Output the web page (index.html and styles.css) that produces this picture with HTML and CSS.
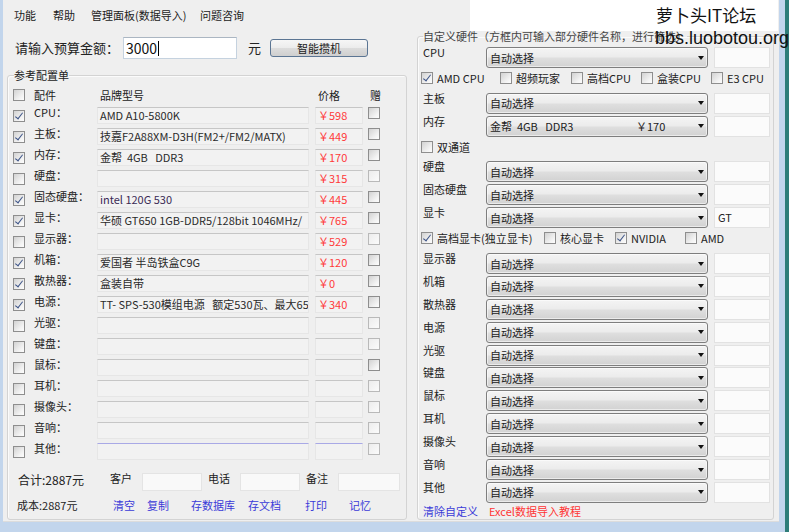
FILE: index.html
```html
<!DOCTYPE html>
<html lang="zh-CN">
<head>
<meta charset="utf-8">
<title>攒机助手</title>
<link rel="stylesheet" href="styles.css">
</head>
<body>
<div class="window">
  <nav class="menu"><span>功能</span><span>帮助</span><span>管理面板(数据导入)</span><span>问题咨询</span></nav>

  <div class="main">
    <section class="left">
      <div class="budget">
        <span class="budget-label">请输入预算金额：</span>
        <div class="budget-input">3000<span class="caret"></span></div>
        <span class="yuan">元</span>
        <button class="btn">智能攒机</button>
      </div>

      <fieldset class="group ref">
        <legend>参考配置单</legend>
        <div class="thead">
          <span class="cb"></span><span class="h-part">配件</span><span class="h-model">品牌型号</span><span class="h-price">价格</span><span class="h-gift">赠</span>
        </div>
        <div class="rows">
          <div class="row"><span class="cb on"></span><span class="lbl">CPU：</span><div class="mbox">AMD A10-5800K</div><div class="pbox">￥598</div><span class="cb gift"></span></div>
          <div class="row"><span class="cb on"></span><span class="lbl">主板：</span><div class="mbox">技嘉F2A88XM-D3H(FM2+/FM2/MATX)</div><div class="pbox">￥449</div><span class="cb gift"></span></div>
          <div class="row"><span class="cb on"></span><span class="lbl">内存：</span><div class="mbox">金帮  4GB   DDR3</div><div class="pbox">￥170</div><span class="cb gift"></span></div>
          <div class="row"><span class="cb"></span><span class="lbl">硬盘：</span><div class="mbox"></div><div class="pbox">￥315</div><span class="cb gift light"></span></div>
          <div class="row"><span class="cb on"></span><span class="lbl">固态硬盘：</span><div class="mbox purple">intel 120G 530</div><div class="pbox">￥445</div><span class="cb gift"></span></div>
          <div class="row"><span class="cb on"></span><span class="lbl">显卡：</span><div class="mbox">华硕 GT650 1GB-DDR5/128bit 1046MHz/</div><div class="pbox">￥765</div><span class="cb gift"></span></div>
          <div class="row"><span class="cb"></span><span class="lbl">显示器：</span><div class="mbox"></div><div class="pbox">￥529</div><span class="cb gift light"></span></div>
          <div class="row"><span class="cb on"></span><span class="lbl">机箱：</span><div class="mbox">爱国者 半岛铁盒C9G</div><div class="pbox">￥120</div><span class="cb gift"></span></div>
          <div class="row"><span class="cb on"></span><span class="lbl">散热器：</span><div class="mbox">盒装自带</div><div class="pbox">￥0</div><span class="cb gift"></span></div>
          <div class="row"><span class="cb on"></span><span class="lbl">电源：</span><div class="mbox">TT- SPS-530模组电源   额定530瓦、最大65</div><div class="pbox">￥340</div><span class="cb gift"></span></div>
          <div class="row"><span class="cb"></span><span class="lbl">光驱：</span><div class="mbox"></div><div class="pbox"></div><span class="cb gift light"></span></div>
          <div class="row"><span class="cb"></span><span class="lbl">键盘：</span><div class="mbox"></div><div class="pbox"></div><span class="cb gift light"></span></div>
          <div class="row"><span class="cb"></span><span class="lbl">鼠标：</span><div class="mbox"></div><div class="pbox"></div><span class="cb gift"></span></div>
          <div class="row"><span class="cb"></span><span class="lbl">耳机：</span><div class="mbox"></div><div class="pbox"></div><span class="cb gift light"></span></div>
          <div class="row"><span class="cb"></span><span class="lbl">摄像头：</span><div class="mbox"></div><div class="pbox"></div><span class="cb gift light"></span></div>
          <div class="row"><span class="cb"></span><span class="lbl">音响：</span><div class="mbox"></div><div class="pbox"></div><span class="cb gift light"></span></div>
          <div class="row"><span class="cb"></span><span class="lbl">其他：</span><div class="mbox blue-top"></div><div class="pbox blue-top"></div><span class="cb gift light"></span></div>
        </div>

        <div class="totals">
          <span class="sum">合计:2887元</span>
          <span class="flabel">客户</span><span class="field"></span>
          <span class="flabel gap">电话</span><span class="field"></span>
          <span class="flabel gap">备注</span><span class="field wide"></span>
        </div>
        <div class="actions">
          <span class="cost">成本:2887元</span>
          <a class="link">清空</a><a class="link">复制</a><a class="link">存数据库</a><a class="link">存文档</a><a class="link">打印</a><a class="link">记忆</a>
        </div>
      </fieldset>
    </section>

    <section class="right">
      <fieldset class="group custom">
        <legend>自定义硬件（方框内可输入部分硬件名称，进行筛选）</legend>
        <div class="hw">
          <div class="hrow"><span class="hlabel">CPU</span><div class="sel"><span>自动选择</span><i class="arrow"></i></div><span class="tb"></span></div>
          <div class="opts opts-cpu">
            <label class="opt"><span class="cb on"></span>AMD CPU</label>
            <label class="opt"><span class="cb"></span>超频玩家</label>
            <label class="opt"><span class="cb"></span>高档CPU</label>
            <label class="opt"><span class="cb"></span>盒装CPU</label>
            <label class="opt"><span class="cb"></span>E3 CPU</label>
          </div>
          <div class="hrow"><span class="hlabel">主板</span><div class="sel"><span>自动选择</span><i class="arrow"></i></div><span class="tb"></span></div>
          <div class="hrow"><span class="hlabel">内存</span><div class="sel"><span class="mem">金帮  4GB   DDR3</span><span>￥170</span><i class="arrow"></i></div><span class="tb"></span></div>
          <div class="opts"><label class="opt"><span class="cb"></span>双通道</label></div>
          <div class="hrow"><span class="hlabel">硬盘</span><div class="sel"><span>自动选择</span><i class="arrow"></i></div><span class="tb"></span></div>
          <div class="hrow"><span class="hlabel">固态硬盘</span><div class="sel"><span>自动选择</span><i class="arrow"></i></div><span class="tb"></span></div>
          <div class="hrow"><span class="hlabel">显卡</span><div class="sel"><span>自动选择</span><i class="arrow"></i></div><span class="tb">GT</span></div>
          <div class="opts opts-gpu">
            <label class="opt"><span class="cb on"></span>高档显卡(独立显卡)</label>
            <label class="opt"><span class="cb"></span>核心显卡</label>
            <label class="opt"><span class="cb on"></span>NVIDIA</label>
            <label class="opt"><span class="cb"></span>AMD</label>
          </div>
          <div class="hrow"><span class="hlabel">显示器</span><div class="sel"><span>自动选择</span><i class="arrow"></i></div><span class="tb"></span></div>
          <div class="hrow"><span class="hlabel">机箱</span><div class="sel"><span>自动选择</span><i class="arrow"></i></div><span class="tb"></span></div>
          <div class="hrow"><span class="hlabel">散热器</span><div class="sel"><span>自动选择</span><i class="arrow"></i></div><span class="tb"></span></div>
          <div class="hrow"><span class="hlabel">电源</span><div class="sel"><span>自动选择</span><i class="arrow"></i></div><span class="tb"></span></div>
          <div class="hrow"><span class="hlabel">光驱</span><div class="sel"><span>自动选择</span><i class="arrow"></i></div><span class="tb"></span></div>
          <div class="hrow"><span class="hlabel">键盘</span><div class="sel"><span>自动选择</span><i class="arrow"></i></div><span class="tb"></span></div>
          <div class="hrow"><span class="hlabel">鼠标</span><div class="sel"><span>自动选择</span><i class="arrow"></i></div><span class="tb"></span></div>
          <div class="hrow"><span class="hlabel">耳机</span><div class="sel"><span>自动选择</span><i class="arrow"></i></div><span class="tb"></span></div>
          <div class="hrow"><span class="hlabel">摄像头</span><div class="sel"><span>自动选择</span><i class="arrow"></i></div><span class="tb"></span></div>
          <div class="hrow"><span class="hlabel">音响</span><div class="sel"><span>自动选择</span><i class="arrow"></i></div><span class="tb"></span></div>
          <div class="hrow"><span class="hlabel">其他</span><div class="sel"><span>自动选择</span><i class="arrow"></i></div><span class="tb"></span></div>
          <div class="hlinks"><a class="link">清除自定义</a><a class="link red">Excel数据导入教程</a></div>
        </div>
      </fieldset>
    </section>
  </div>

  <div class="wm-box"></div>
  <div class="wm-title">萝卜头IT论坛</div>
  <div class="wm-url">bbs.luobotou.org</div>
</div>
</body>
</html>
```

FILE: styles.css
```css
* { box-sizing: border-box; margin: 0; padding: 0; }

body {
  margin: 0;
  width: 789px;
  height: 532px;
  overflow: hidden;
  background: linear-gradient(to right, #c2d5ec 0, #c2d5ec 785px, #2e7d78 785px);
  font-family: "Noto Sans CJK SC", "Microsoft YaHei", sans-serif;
  font-size: 11px;
  color: #222;
}

.window {
  position: relative;
  margin-left: 3px;
  width: 776px;
  height: 522px;
  background: #efefef;
  border-bottom: 1px solid #dcdcdc;
}

/* menu */
.menu {
  height: 28px;
  display: grid;
  grid-template-columns: 39px 38px 109px auto;
  align-items: center;
  padding: 2px 0 0 11px;
  line-height: 14px;
  color: #222;
}

.main {
  display: flex;
  gap: 10px;
  padding-left: 4px;
}

.left { width: 400px; flex: none; display: flex; flex-direction: column; }
.right { width: 357px; flex: none; padding-top: 1px; }

/* budget */
.budget {
  margin-top: 9px;
  height: 22px;
  display: flex;
  align-items: center;
  padding-left: 8px;
}
.budget-label { width: 108px; font-size: 13px; line-height: 16px; color: #222; }
.budget-input {
  width: 114px;
  height: 22px;
  background: #fff;
  border: 1px solid #c5d2df;
  border-top-color: #abb6c2;
  font-size: 14px;
  line-height: 20px;
  padding-left: 2px;
  display: flex;
  align-items: center;
  color: #111;
}
.caret { width: 1px; height: 15px; background: #000; margin-left: 1px; }
.yuan { width: 22px; margin-left: 11px; font-size: 13px; line-height: 16px; }
.btn {
  width: 98px;
  height: 18px;
  border: 1px solid #5b7593;
  border-radius: 3px;
  background: linear-gradient(#f6f6f6 0, #ececec 48%, #dcdcdc 52%, #cfcfcf 100%);
  font-family: inherit;
  font-size: 11px;
  line-height: 14px;
  color: #222;
}

/* group boxes */
.group {
  border: 1px solid #d3d3d3;
  border-radius: 3px;
  padding: 0 5px;
  margin: 0;
  min-width: 0;
  box-shadow: inset 1px 1px 0 #fbfbfb;
}
.group legend {
  padding: 0;
  line-height: 14px;
  font-size: 11px;
}
.ref { margin-top: 9px; height: 452px; }
.ref legend { margin-left: 1px; color: #222; }
.custom { height: 491px; }
.custom legend { color: #444; }

/* left table */
.thead {
  margin-top: 6px;
  height: 14px;
  display: flex;
  align-items: center;
  line-height: 14px;
}
.thead .cb { margin-right: 9px; }
.h-part { width: 63px; }
.h-model { width: 212px; padding-left: 3px; }
.h-price { width: 48px; margin-left: 6px; padding-left: 3px; }
.h-gift { margin-left: 5px; padding-left: 2px; }

.rows { margin-top: 5px; display: flex; flex-direction: column; gap: 4px; }
.row { height: 17px; display: flex; align-items: center; }
.row > .cb:first-child { margin-right: 9px; }
.lbl { width: 63px; align-self: flex-start; margin-top: -2px; line-height: 14px; color: #222; }
.mbox, .pbox {
  flex: none;
  height: 17px;
  background: #f2f2f2;
  border: 1px solid #e6e6e6;
  border-top-color: #c6c6c6;
  padding-left: 2px;
  line-height: 15px;
  white-space: pre;
  overflow: hidden;
  color: #2a2a2a;
}
.mbox { width: 212px; }
.mbox.purple { color: #3a2a55; }
.pbox { width: 48px; margin-left: 6px; color: #ff3a3a; }
.blue-top { border-top-color: #a9a9e6; }
.gift { margin-left: 5px; align-self: flex-start; }

/* checkboxes */
.cb {
  flex: none;
  display: inline-block;
  position: relative;
  width: 12px;
  height: 12px;
  border: 1px solid #8e8e8e;
  background: linear-gradient(135deg, #d2d2d2 0, #f3f3f3 70%, #fdfdfd 100%);
}
.cb.light { border-color: #b9b9b9; background: linear-gradient(135deg, #ececec, #fbfbfb); }
.cb.on::after {
  content: "";
  position: absolute;
  left: 3px;
  top: 0px;
  width: 3px;
  height: 7px;
  border: solid #3e5588;
  border-width: 0 1.5px 1.5px 0;
  transform: rotate(38deg);
}

/* totals */
.totals {
  margin-top: 13px;
  height: 18px;
  display: flex;
  align-items: flex-start;
  padding-left: 5px;
}
.sum { width: 92px; font-size: 12px; line-height: 14px; color: #222; }
.flabel { width: 32px; line-height: 14px; margin-top: -2px; color: #222; }
.flabel.gap { margin-left: 6px; }
.field { width: 60px; height: 18px; background: #f9f9f9; border: 1px solid #e4e4e4; }
.field.wide { width: 62px; }

.actions {
  margin-top: 7px;
  height: 14px;
  display: grid;
  grid-template-columns: 96px 34px 44px 57px 57px 44px auto;
  padding-left: 4px;
  line-height: 14px;
}
.cost { color: #222; }
.link { color: #3b3bd8; text-decoration: none; white-space: nowrap; }
.link.red { color: #ff3434; }

/* right panel */
.hw { display: flex; flex-direction: column; gap: 1.9px; padding-top: 4px; }
.hrow { height: 21px; display: flex; }
.hlabel { flex: none; width: 63px; line-height: 14px; margin-top: -2px; color: #222; }
.sel {
  flex: none;
  width: 222px;
  height: 21px;
  border: 1px solid #7e7e7e;
  border-radius: 3px;
  background: linear-gradient(#f4f4f4 0, #ececec 45%, #dedede 55%, #d2d2d2 100%);
  box-shadow: inset 0 0 0 1px rgba(255, 255, 255, 0.55);
  display: flex;
  align-items: center;
  padding: 0 3px 0 3px;
  line-height: 14px;
  color: #222;
  white-space: pre;
}
.mem { width: 146px; }
.arrow {
  margin-left: auto;
  width: 0;
  height: 0;
  border-left: 3.5px solid transparent;
  border-right: 3.5px solid transparent;
  border-top: 4px solid #111;
}
.tb {
  flex: none;
  width: 56px;
  height: 21px;
  margin-left: 6px;
  background: #fbfbfb;
  border: 1px solid #e2e2e2;
  padding-left: 3px;
  line-height: 19px;
  color: #222;
}

.opts {
  height: 21px;
  margin-left: -2px;
  padding-top: 2px;
  display: grid;
  grid-template-columns: auto;
  align-items: start;
}
.opts-cpu { grid-template-columns: 79px 71px 70px 70px auto; }
.opts-gpu { grid-template-columns: 123px 71px 70px auto; }
.opt { display: flex; align-items: center; gap: 4px; line-height: 12px; color: #222; white-space: nowrap; }

.hlinks {
  margin-top: -1px;
  height: 14px;
  display: grid;
  grid-template-columns: 66px auto;
  line-height: 14px;
}

/* watermark overlay */
.wm-box {
  position: absolute;
  left: 467px;
  top: 0;
  width: 308px;
  height: 31px;
  background: #ffffff;
}
.wm-title {
  position: absolute;
  left: 653px;
  top: 5px;
  font-size: 17px;
  line-height: 20px;
  color: #111;
}
.wm-url {
  position: absolute;
  left: 652px;
  top: 28px;
  font-family: "Liberation Sans", Arial, sans-serif;
  font-size: 18px;
  line-height: 20px;
  color: #111;
  white-space: nowrap;
}
```
